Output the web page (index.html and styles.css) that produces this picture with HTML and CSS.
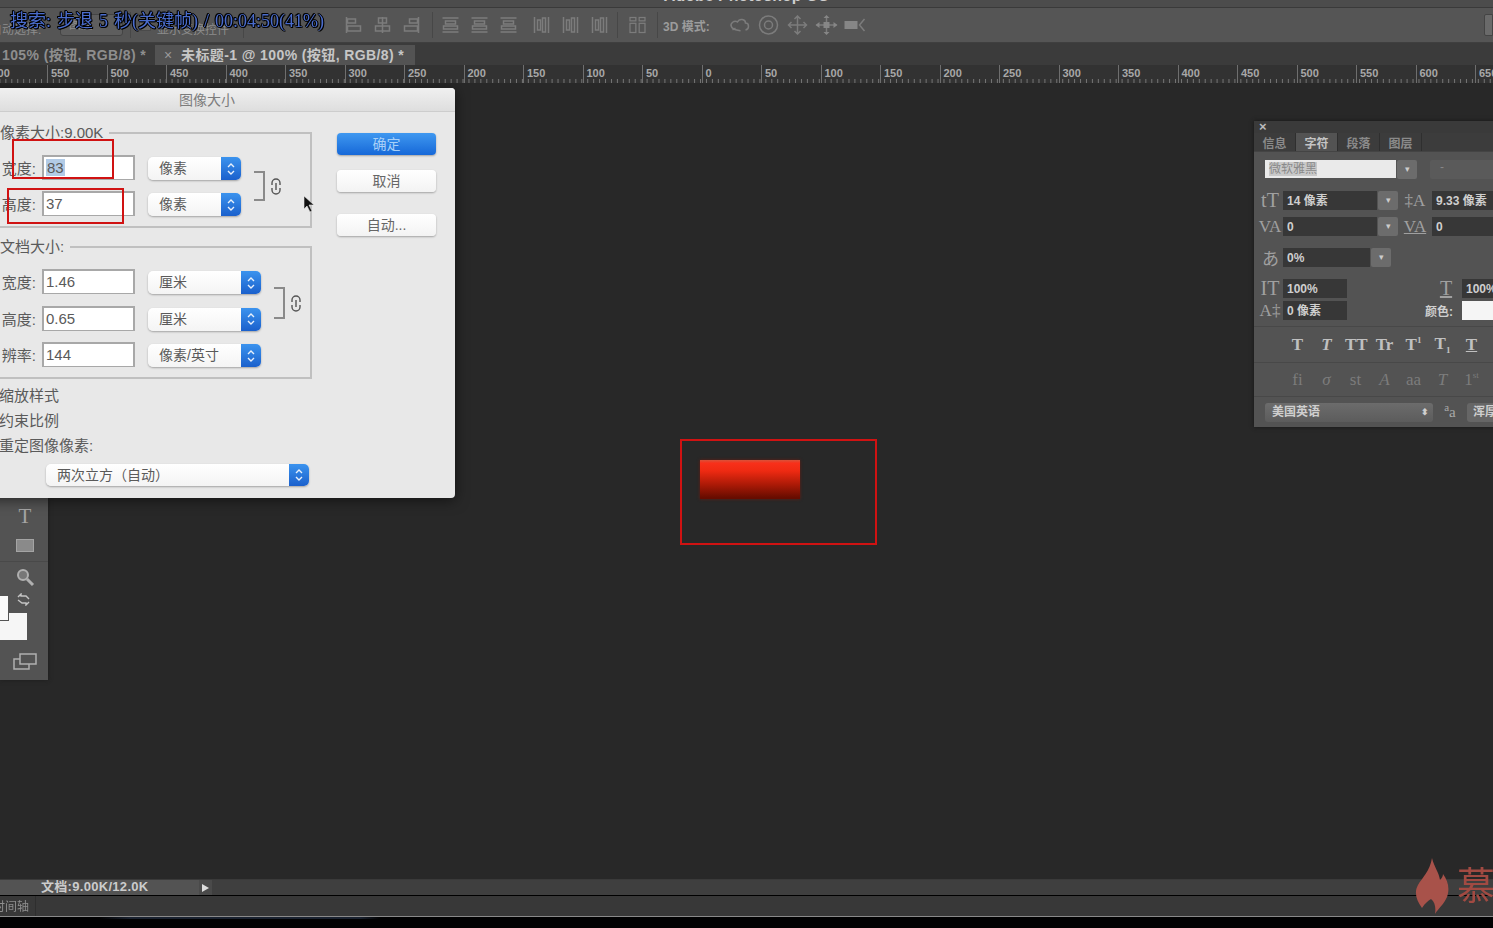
FILE: index.html
```html
<!DOCTYPE html>
<html lang="zh-CN">
<head>
  <meta charset="UTF-8" />
  <title>图像大小</title>
  <link rel="stylesheet" href="styles.css">
</head>
<body>
  <svg class="defs" width="0" height="0">
    <symbol id="al-left" viewBox="0 0 20 20"><path d="M3 2v16" /><rect x="4" y="4" width="8" height="4" /><rect x="4" y="11" width="13" height="5" /></symbol>
    <symbol id="al-mid" viewBox="0 0 20 20"><path d="M10 2v16" /><rect x="6" y="3" width="8" height="5" /><rect x="3" y="11" width="14" height="5" /></symbol>
    <symbol id="al-right" viewBox="0 0 20 20"><path d="M17 2v16" /><rect x="8" y="4" width="8" height="4" /><rect x="3" y="11" width="13" height="5" /></symbol>
    <symbol id="dist-h" viewBox="0 0 20 20"><path d="M2 3h16M2 17h16" /><rect x="5" y="6" width="10" height="3" /><rect x="3" y="11" width="14" height="3" /></symbol>
    <symbol id="dist-v" viewBox="0 0 20 20"><path d="M3 2v16M17 2v16" /><rect x="6" y="5" width="3" height="10" /><rect x="11" y="3" width="3" height="14" /></symbol>
    <symbol id="columns" viewBox="0 0 22 24"><rect x="2" y="3" width="7" height="4" /><rect x="13" y="3" width="7" height="4" /><rect x="2" y="10" width="7" height="11" /><rect x="13" y="10" width="7" height="11" /></symbol>
    <symbol id="chain" viewBox="0 0 12 17"><path d="M2 7V5a4 4 0 0 1 8 0v2M2 10v2a4 4 0 0 0 8 0v-2M6 5v7" /></symbol>
    <symbol id="updown" viewBox="0 0 10 16"><path d="M2 6l3-3 3 3M2 10l3 3 3-3" /></symbol>
  </svg>

  <div class="app">
    <div class="title-bar"><span>Adobe Photoshop CC</span></div>

    <div class="options-bar">
      <span class="opt-label">自动选择:</span>
      <span class="opt-select">图层</span>
      <i class="opt-sep sep-a"></i>
      <span class="opt-check"></span>
      <span class="opt-text">显示变换控件</span>
      <i class="opt-sep sep-b"></i>
      <span class="opt-dim"></span>
      <svg class="opt-icon"><use href="#al-left" /></svg>
      <svg class="opt-icon"><use href="#al-mid" /></svg>
      <svg class="opt-icon"><use href="#al-right" /></svg>
      <i class="opt-sep sep-c"></i>
      <svg class="opt-icon"><use href="#dist-h" /></svg>
      <svg class="opt-icon"><use href="#dist-h" /></svg>
      <svg class="opt-icon"><use href="#dist-h" /></svg>
      <svg class="opt-icon gap-left"><use href="#dist-v" /></svg>
      <svg class="opt-icon"><use href="#dist-v" /></svg>
      <svg class="opt-icon"><use href="#dist-v" /></svg>
      <i class="opt-sep sep-d"></i>
      <svg class="opt-icon"><use href="#columns" /></svg>
      <i class="opt-sep sep-e"></i>
      <span class="mode-3d">3D 模式:</span>
      <svg class="opt-icon" viewBox="0 0 24 20"><path d="M4 12c-2-4 3-7 6-5 2-4 8-3 8 1 4 0 4 6 0 7M4 12c2 3 6 3 9 4M8 13l-3 2" /></svg>
      <svg class="opt-icon" viewBox="0 0 24 20"><circle cx="12" cy="10" r="9" /><circle cx="12" cy="10" r="4" /></svg>
      <svg class="opt-icon" viewBox="0 0 24 20"><path d="M12 1v18M3 10h18M9 4l3-3 3 3M9 16l3 3 3-3M6 7l-3 3 3 3M18 7l3 3-3 3" /></svg>
      <svg class="opt-icon" viewBox="0 0 24 20"><path d="M2 10h20M12 2v16" /><rect class="solid" x="9" y="7" width="6" height="6" /><path class="solid" d="M9 3h6l-3-3zM9 17h6l-3 3zM5 7v6l-4-3zM19 7v6l4-3z" /></svg>
      <svg class="opt-icon" viewBox="0 0 24 20"><rect class="solid" x="1" y="6" width="13" height="8" /><path d="M21 4l-5 6 5 6" /></svg>
      <span class="opt-end"></span>
    </div>

    <div class="tab-bar">
      <span class="tab">105% (按钮, RGB/8) *</span>
      <span class="tab tab-active"><b class="tab-close">×</b>未标题-1 @ 100% (按钮, RGB/8) *</span>
    </div>

    <div class="ruler">
      <span>600</span><span>550</span><span>500</span><span>450</span><span>400</span><span>350</span><span>300</span><span>250</span><span>200</span><span>150</span><span>100</span><span>50</span><span>0</span><span>50</span><span>100</span><span>150</span><span>200</span><span>250</span><span>300</span><span>350</span><span>400</span><span>450</span><span>500</span><span>550</span><span>600</span><span>650</span>
    </div>

    <div class="canvas">
      <div class="red-button"></div>

      <div class="tools">
        <div class="tool tool-text">T</div>
        <div class="tool"><span class="tool-rect"></span></div>
        <div class="tool-line"></div>
        <div class="tool">
          <svg width="20" height="20" viewBox="0 0 20 20"><circle cx="8" cy="8" r="5" class="lens" /><path d="M12 12l6 6" class="lens-handle" /></svg>
        </div>
        <div class="swatches">
          <span class="swatch-back"></span>
          <span class="swatch-front"></span>
          <svg class="swap" width="13" height="13" viewBox="0 0 13 13"><path d="M1 4l3-3v2h5l3 3M12 9l-3 3v-2H5L1 7" /></svg>
        </div>
        <div class="tool tool-screen">
          <svg width="24" height="18" viewBox="0 0 24 18"><rect x="1" y="6" width="15" height="10" /><rect x="7" y="1" width="16" height="10" /></svg>
        </div>
      </div>

      <div class="dialog">
        <div class="dialog-title">图像大小</div>
        <div class="dialog-body">
          <div class="dialog-left">
            <fieldset class="group group-pixels">
              <legend>像素大小:9.00K</legend>
              <div class="rows">
                <div class="row">
                  <label>宽度:</label>
                  <div class="field"><span class="selected">83</span></div>
                  <div class="select"><span>像素</span><b class="stepper"><svg width="10" height="16"><use href="#updown" /></svg></b></div>
                </div>
                <div class="row">
                  <label>高度:</label>
                  <div class="field">37</div>
                  <div class="select"><span>像素</span><b class="stepper"><svg width="10" height="16"><use href="#updown" /></svg></b></div>
                </div>
              </div>
              <div class="link">
                <span class="bracket"></span>
                <svg class="chain" width="12" height="17"><use href="#chain" /></svg>
              </div>
            </fieldset>

            <fieldset class="group group-doc">
              <legend>文档大小:</legend>
              <div class="rows">
                <div class="row">
                  <label>宽度:</label>
                  <div class="field">1.46</div>
                  <div class="select"><span>厘米</span><b class="stepper"><svg width="10" height="16"><use href="#updown" /></svg></b></div>
                </div>
                <div class="row">
                  <label>高度:</label>
                  <div class="field">0.65</div>
                  <div class="select"><span>厘米</span><b class="stepper"><svg width="10" height="16"><use href="#updown" /></svg></b></div>
                </div>
                <div class="row">
                  <label>辨率:</label>
                  <div class="field">144</div>
                  <div class="select"><span>像素/英寸</span><b class="stepper"><svg width="10" height="16"><use href="#updown" /></svg></b></div>
                </div>
              </div>
              <div class="link">
                <span class="bracket"></span>
                <svg class="chain" width="12" height="17"><use href="#chain" /></svg>
              </div>
            </fieldset>

            <div class="opt-line">缩放样式</div>
            <div class="opt-line">约束比例</div>
            <div class="opt-line">重定图像像素:</div>
            <div class="select select-wide"><span>两次立方（自动）</span><b class="stepper"><svg width="10" height="16"><use href="#updown" /></svg></b></div>
          </div>

          <div class="dialog-right">
            <button class="btn btn-ok">确定</button>
            <button class="btn btn-cancel">取消</button>
            <button class="btn btn-auto">自动...</button>
          </div>
        </div>
      </div>

      <svg class="cursor" width="14" height="20" viewBox="0 0 14 20"><path d="M1 1l0 13 3-3 3 6 2-1-3-6h5z" /></svg>

      <div class="panel">
        <div class="panel-head">×</div>
        <div class="panel-tabs">
          <span>信息</span><span class="on">字符</span><span>段落</span><span>图层</span>
        </div>
        <div class="p-row p-font">
          <span class="font-input"><span>微软雅黑</span></span>
          <b class="p-drop">▾</b>
          <span class="font-style">-</span>
        </div>
        <div class="p-row p-size">
          <span class="p-ico ico-big">tT</span>
          <span class="p-field w94">14 像素</span><b class="p-drop">▾</b>
          <span class="p-ico ico-right">‡A</span>
          <span class="p-field w70">9.33 像素</span>
        </div>
        <div class="p-row p-kern">
          <span class="p-ico">VA</span>
          <span class="p-field w94">0</span><b class="p-drop">▾</b>
          <span class="p-ico ico-right ico-under">VA</span>
          <span class="p-field w70">0</span>
        </div>
        <div class="p-row p-scale">
          <span class="p-ico">あ</span>
          <span class="p-field w87">0%</span><b class="p-drop">▾</b>
        </div>
        <div class="p-row p-vert">
          <span class="p-ico ico-big">IT</span>
          <span class="p-field w64">100%</span>
          <span class="p-ico ico-far ico-big">T</span>
          <span class="p-field w70">100%</span>
        </div>
        <div class="p-row p-base">
          <span class="p-ico">A‡</span>
          <span class="p-field w64">0 像素</span>
          <span class="p-color">颜色:</span>
          <span class="p-white"></span>
        </div>
        <div class="p-glyphs">
          <span>T</span><span class="it">T</span><span>TT</span><span>Tr</span><span>T<sup>1</sup></span><span>T<sub>1</sub></span><span class="un">T</span>
        </div>
        <div class="p-glyphs p-dim">
          <span>fi</span><span class="it">σ</span><span>st</span><span class="it">A</span><span>aa</span><span class="it">T</span><span>1<sup>st</sup></span>
        </div>
        <div class="p-row p-lang">
          <span class="lang-select">美国英语<i>⬍</i></span>
          <span class="lang-aa"><sup>a</sup>a</span>
          <span class="lang-smooth">浑厚</span>
        </div>
      </div>
    </div>

    <div class="status-bar">
      <span class="status-doc">文档:9.00K/12.0K</span>
      <span class="status-arrow"></span>
    </div>
    <div class="timeline-bar"><span>时间轴</span></div>
    <div class="video-strip"></div>

    <div class="watermark">
      <svg width="34" height="56" viewBox="0 0 34 56"><path d="M17 0c2 9 7 14 8 22 2-2 3-4 3-6 5 7 7 14 4 23-3 7-9 12-12 17 1-6 0-12-4-15-3 2-6 4-9 9C1 42-1 34 3 27c4-7 12-14 14-27z" /></svg>
      <span>慕课</span>
    </div>
  </div>

  <div class="caption">搜索: 步退 5 秒(关键帧) / 00:04:50(41%)</div>
  <div class="mark mark-canvas"></div>
  <div class="mark mark-width"></div>
  <div class="mark mark-height"></div>
</body>
</html>
```

FILE: styles.css
```css
* {
  box-sizing: border-box;
}
html, body {
  height: 100%;
}
body {
  margin: 0;
  position: relative;
  overflow: hidden;
  background: #000;
  font-family: "Liberation Sans", "Noto Sans CJK SC", sans-serif;
}
.defs {
  position: absolute;
}
.app {
  position: relative;
  height: 100%;
  display: flex;
  flex-direction: column;
  overflow: hidden;
  filter: blur(0.6px);
}

/* top bars */
.title-bar {
  height: 8px;
  flex: none;
  background: #4c4c4c;
  border-bottom: 1px solid #3a3a3a;
  text-align: center;
  overflow: hidden;
}
.title-bar span {
  display: block;
  margin-top: -13px;
  font-size: 16px;
  line-height: 18px;
  font-weight: bold;
  color: #cfcfcf;
}
.options-bar {
  height: 35px;
  flex: none;
  display: flex;
  align-items: center;
  background: #555;
  border-bottom: 1px solid #3f3f3f;
  color: #8c8c8c;
  font-size: 12px;
}
.opt-label {
  width: 60px;
  flex: none;
  white-space: nowrap;
  margin-left: -10px;
  margin-right: 10px;
  padding-top: 6px;
}
.opt-select {
  width: 63px;
  height: 22px;
  flex: none;
  background: #5e5e5e;
  border: 1px solid #444;
  border-radius: 3px;
  padding-left: 8px;
  line-height: 20px;
}
.opt-sep {
  width: 1px;
  height: 26px;
  flex: none;
  background: #474747;
}
.sep-a { margin: 0 8px 0 7px; }
.sep-b { margin: 0 10px 0 10px; }
.sep-c { margin: 0 3px 0 6px; }
.sep-d { margin: 0 5px 0 3px; }
.sep-e { margin: 0 5px 0 5px; }
.opt-check {
  width: 12px;
  height: 12px;
  flex: none;
  margin-right: 6px;
  background: #666;
  border: 1px solid #4a4a4a;
}
.opt-text {
  width: 76px;
  flex: none;
  padding-top: 6px;
  white-space: nowrap;
}
.opt-dim {
  width: 85px;
  flex: none;
}
.opt-icon {
  width: 29px;
  height: 20px;
  flex: none;
  fill: none;
  stroke: #7c7c7c;
  stroke-width: 1.5;
}
.opt-icon .solid {
  fill: #868686;
  stroke: none;
}
.gap-left {
  margin-left: 4px;
}
.mode-3d {
  width: 62px;
  flex: none;
  font-weight: bold;
  white-space: nowrap;
  color: #9c9c9c;
}
.opt-end {
  width: 9px;
  height: 22px;
  margin-left: auto;
  background: #6a6a6a;
  border: 1px solid #444;
  border-radius: 2px 0 0 2px;
}
.tab-bar {
  height: 22px;
  flex: none;
  display: flex;
  align-items: flex-end;
  background: #3b3b3b;
}
.tab {
  width: 155px;
  height: 20px;
  padding-left: 2px;
  font-size: 14px;
  font-weight: bold;
  letter-spacing: 0.4px;
  line-height: 20px;
  color: #8e8e8e;
  white-space: nowrap;
}
.tab-active {
  width: 260px;
  padding-left: 9px;
  background: #535353;
  color: #c6c6c6;
}
.tab-close {
  display: inline-block;
  width: 17px;
  color: #9a9a9a;
  font-weight: normal;
}
.ruler {
  height: 18px;
  flex: none;
  display: flex;
  overflow: hidden;
  background-color: #323232;
  background-image: linear-gradient(90deg, #757575 1px, transparent 1px);
  background-size: 5.95px 4px;
  background-position: 5.35px bottom;
  background-repeat: repeat-x;
}
.ruler span {
  width: 59.5px;
  flex: none;
  padding: 2px 0 0 3px;
  font-size: 11px;
  font-weight: bold;
  line-height: 13px;
  color: #a8a8a8;
  border-left: 1px solid #6e6e6e;
}
.ruler span:first-child {
  margin-left: -12.5px;
}

/* document area */
.canvas {
  flex: 1;
  position: relative;
  overflow: hidden;
  background: #282828;
}
.red-button {
  position: absolute;
  left: 700px;
  top: 377px;
  width: 100px;
  height: 39px;
  background: linear-gradient(#d8523a 0, #f8301a 8%, #ee2a12 28%, #a81906 65%, #660c00 97%);
  box-shadow: 0 0 3px #6a1c10;
}

/* tool strip */
.tools {
  position: absolute;
  left: 0;
  top: 415px;
  width: 48px;
  height: 182px;
  padding-top: 4px;
  background: #535353;
  box-shadow: 0 0 4px #1c1c1c;
}
.tool {
  height: 29px;
  display: flex;
  align-items: center;
  justify-content: center;
  padding-left: 2px;
}
.tool-text {
  font-family: "Liberation Serif", serif;
  font-size: 21px;
  color: #a6a6a6;
}
.tool-rect {
  width: 18px;
  height: 13px;
  background: #8a8a8a;
  border: 1px solid #a4a4a4;
}
.tool-line {
  height: 1px;
  margin-top: 1px;
  background: #494949;
}
.lens {
  fill: #777;
  stroke: #b0b0b0;
  stroke-width: 2;
}
.lens-handle {
  fill: none;
  stroke: #b0b0b0;
  stroke-width: 3;
}
.swatches {
  position: relative;
  height: 52px;
}
.swatch-back {
  position: absolute;
  left: 0;
  top: 22px;
  width: 27px;
  height: 27px;
  background: #f6f6f6;
}
.swatch-front {
  position: absolute;
  left: 0;
  top: 5px;
  width: 9px;
  height: 25px;
  background: #fafafa;
  border-right: 1px solid #555;
  border-bottom: 1px solid #555;
}
.swap {
  position: absolute;
  left: 17px;
  top: 2px;
  fill: none;
  stroke: #c4c4c4;
  stroke-width: 1.4;
}
.tool-screen {
  height: 32px;
  margin-top: 3px;
}
.tool-screen svg {
  fill: #535353;
  stroke: #b0b0b0;
  stroke-width: 1.5;
}

/* image size dialog */
.dialog {
  position: absolute;
  left: -41px;
  top: 5px;
  width: 496px;
  height: 410px;
  background: #e8e8e8;
  border-radius: 4px;
  box-shadow: 0 2px 14px rgba(0, 0, 0, 0.55);
  color: #5a5a5a;
  font-size: 15px;
}
.dialog-title {
  height: 24px;
  text-align: center;
  font-size: 14px;
  line-height: 25px;
  color: #7c7c7c;
  background: linear-gradient(#f0f0f0, #dedede);
  border-bottom: 1px solid #cdcdcd;
  border-radius: 4px 4px 0 0;
}
.dialog-body {
  display: flex;
  padding: 12px 0 0 20px;
}
.dialog-left {
  width: 333px;
  flex: none;
}
.dialog-right {
  width: 99px;
  margin: 9px 0 0 25px;
  display: flex;
  flex-direction: column;
}
.group {
  display: flex;
  margin: 0;
  padding: 0 0 10px;
  min-width: 0;
  border: 1px solid #c0c0c0;
  border-width: 2px 2px 2px 1px;
}
.group legend {
  margin-left: 20px;
  padding: 0 6px 0 0;
  line-height: 18px;
}
.group-pixels .rows {
  padding-top: 13px;
}
.group-doc {
  margin-top: 10px;
}
.group-doc .rows {
  padding-top: 13px;
  gap: 11.5px;
}
.rows {
  display: flex;
  flex-direction: column;
  gap: 11px;
}
.row {
  height: 25px;
  display: flex;
  align-items: center;
}
.row label {
  width: 56px;
  flex: none;
  text-align: right;
  white-space: nowrap;
}
.field {
  width: 93px;
  height: 25px;
  flex: none;
  margin: 0 13px 0 6px;
  padding-left: 2px;
  font-size: 15px;
  line-height: 22px;
  background: #fff;
  border: 1px solid #a8a8a8;
  border-width: 2px 2px 1px 2px;
}
.selected {
  background: #b2cbe6;
  padding: 0 1px;
}
.select {
  height: 23px;
  display: flex;
  width: 93px;
  flex: none;
  margin-top: 2px;
  background: linear-gradient(#fff, #f4f4f4);
  border-radius: 5px;
  box-shadow: 0 1px 2px rgba(0, 0, 0, 0.3);
  overflow: hidden;
}
.group-doc .select {
  width: 113px;
}
.select span {
  flex: 1;
  padding-left: 11px;
  font-size: 14px;
  line-height: 23px;
  white-space: nowrap;
}
.stepper {
  width: 20px;
  flex: none;
  display: flex;
  align-items: center;
  justify-content: center;
  background: linear-gradient(#3b93ee, #1a60cc);
}
.stepper svg {
  fill: none;
  stroke: #e8f0fb;
  stroke-width: 1.4;
}
.link {
  height: 30px;
  display: flex;
  align-items: center;
  margin: 29px 0 0 13px;
}
.group-doc .link {
  height: 32px;
  margin-top: 31px;
}
.bracket {
  width: 11px;
  height: 100%;
  border: 2px solid #8a8a8a;
  border-left: 0;
}
.chain {
  margin-left: 5px;
  fill: none;
  stroke: #555;
  stroke-width: 1.4;
}
.opt-line {
  line-height: 25px;
  white-space: nowrap;
  margin-left: 20px;
}
.group-doc + .opt-line {
  margin-top: 4px;
}
.select-wide,
.group-doc .select.select-wide {
  width: 263px;
  height: 22px;
  margin: 6px 0 0 67px;
}
.btn {
  height: 22px;
  padding: 0 0 3px;
  border: 0;
  border-radius: 4px;
  font-family: inherit;
  font-size: 14px;
  color: #666;
  background: linear-gradient(#fff, #f3f3f3);
  box-shadow: 0 1px 2px rgba(0, 0, 0, 0.3);
}
.btn-ok {
  color: #a8d0f8;
  background: linear-gradient(#3f98f0, #1668d8);
}
.btn-cancel {
  margin-top: 15px;
}
.btn-auto {
  margin-top: 22px;
}
.cursor {
  position: absolute;
  left: 303px;
  top: 112px;
  fill: #111;
  stroke: #e8e8e8;
  stroke-width: 0.6;
}

/* character panel */
.panel {
  position: absolute;
  left: 1254px;
  top: 38px;
  width: 270px;
  height: 306px;
  background: #535353;
  box-shadow: 0 0 4px #161616;
  color: #cfcfcf;
  font-size: 12px;
}
.panel-head {
  height: 12px;
  padding-left: 5px;
  background: #3a3a3a;
  font-size: 13px;
  font-weight: bold;
  line-height: 12px;
  color: #bbb;
}
.panel-tabs {
  height: 19px;
  display: flex;
  background: #3c3c3c;
  border-bottom: 1px solid #444;
  color: #8a8a8a;
}
.panel-tabs span {
  width: 42px;
  text-align: center;
  line-height: 22px;
  font-weight: bold;
  border-right: 1px solid #2f2f2f;
}
.panel-tabs .on {
  background: #535353;
  color: #c4c4c4;
}
.p-row {
  display: flex;
  align-items: center;
}
.p-font {
  height: 18px;
  margin-top: 8px;
  padding-left: 11px;
}
.font-input {
  width: 131px;
  height: 18px;
  padding-left: 4px;
  background: #eaeaea;
  line-height: 18px;
  color: #8a8a8a;
}
.font-input span {
  background: #c9c9c9;
}
.p-drop {
  width: 20px;
  height: 19px;
  flex: none;
  margin-left: 1px;
  background: #6c6c6c;
  border-radius: 2px;
  text-align: center;
  font-size: 9px;
  font-weight: normal;
  line-height: 19px;
  color: #ccc;
}
.font-style {
  width: 70px;
  height: 19px;
  margin-left: 13px;
  padding-left: 10px;
  background: #5a5a5a;
  border-radius: 2px;
  color: #888;
}
.p-size { margin-top: 13px; }
.p-kern { margin-top: 7px; }
.p-scale { margin-top: 12px; }
.p-vert { margin-top: 12px; }
.p-base { margin-top: 3px; }
.p-size, .p-kern, .p-scale, .p-vert, .p-base {
  height: 19px;
  padding-left: 3px;
}
.p-ico {
  width: 26px;
  flex: none;
  text-align: center;
  font-family: "Liberation Serif", serif;
  font-size: 17px;
  color: #a0a0a0;
}
.ico-big {
  font-size: 20px;
}
.ico-right {
  width: 34px;
}
.ico-under {
  text-decoration: underline;
}
.ico-far {
  width: 30px;
  margin-left: 84px;
  margin-right: 1px;
  text-decoration: underline;
}
.p-field {
  height: 19px;
  flex: none;
  padding-left: 4px;
  background: #373737;
  font-weight: bold;
  line-height: 20px;
  white-space: nowrap;
  overflow: hidden;
}
.w94 { width: 94px; }
.w87 { width: 87px; }
.w70 { width: 70px; }
.w64 { width: 64px; }
.p-color {
  width: 36px;
  margin-left: 78px;
  margin-right: 1px;
  font-weight: bold;
}
.p-white {
  width: 60px;
  height: 19px;
  background: #f5f5f5;
}
.p-glyphs {
  height: 36px;
  margin-top: 6px;
  padding: 0 0 0 33px;
  display: flex;
  gap: 8px;
  align-items: center;
  border-top: 1px solid #484848;
  font-family: "Liberation Serif", serif;
  font-size: 17px;
  font-weight: bold;
  color: #c0c0c0;
}
.p-glyphs span {
  width: 21px;
  text-align: center;
  white-space: nowrap;
}
.p-glyphs sup, .p-glyphs sub {
  font-size: 9px;
}
.p-glyphs .it {
  font-style: italic;
}
.p-glyphs .un {
  text-decoration: underline;
}
.p-dim {
  height: 34px;
  margin-top: 0;
  color: #7c7c7c;
  font-weight: normal;
}
.p-lang {
  height: 32px;
  padding-left: 11px;
  border-top: 1px solid #484848;
}
.lang-select {
  width: 168px;
  height: 19px;
  display: flex;
  justify-content: space-between;
  padding: 0 4px 0 7px;
  background: linear-gradient(#6c6c6c, #5c5c5c);
  border-radius: 3px;
  font-weight: bold;
  line-height: 19px;
}
.lang-select i {
  font-style: normal;
  font-size: 9px;
}
.lang-aa {
  width: 34px;
  text-align: center;
  font-family: "Liberation Serif", serif;
  font-size: 15px;
  color: #a8a8a8;
}
.lang-aa sup {
  font-size: 11px;
  line-height: 0;
}
.lang-smooth {
  height: 19px;
  padding-left: 6px;
  background: #666;
  border-radius: 3px;
  font-weight: bold;
  line-height: 19px;
}

/* bottom bars */
.status-bar {
  height: 16px;
  flex: none;
  display: flex;
  background: #3f3f3f;
  border-top: 1px solid #3a3a3a;
}
.status-doc {
  width: 199px;
  padding-left: 41px;
  background: #535353;
  font-size: 13px;
  font-weight: bold;
  letter-spacing: 0.3px;
  line-height: 14px;
  color: #cccccc;
  white-space: nowrap;
}
.status-arrow {
  width: 13px;
  background: #4a4a4a;
  position: relative;
}
.status-arrow::after {
  content: "";
  position: absolute;
  left: 3px;
  top: 4px;
  border-left: 7px solid #ddd;
  border-top: 4px solid transparent;
  border-bottom: 4px solid transparent;
}
.timeline-bar {
  height: 21px;
  flex: none;
  margin-top: 1px;
  background: #383838;
  border-bottom: 1px solid #8a8a8a;
}
.timeline-bar span {
  display: block;
  width: 36px;
  height: 100%;
  border-right: 1px solid #2e2e2e;
  font-size: 12px;
  line-height: 23px;
  color: #8e8e8e;
  text-indent: -7px;
  white-space: nowrap;
  overflow: hidden;
}
.video-strip {
  height: 11px;
  flex: none;
  background-color: #020203;
  background-image: linear-gradient(90deg, #020203 100px, #1a2230 130px, #1a2230 360px, #020203 380px);
  background-size: 100% 2px;
  background-repeat: no-repeat;
}

/* watermark over the lower corner */
.watermark {
  position: absolute;
  left: 1415px;
  top: 858px;
  display: flex;
  align-items: center;
  gap: 8px;
  white-space: nowrap;
  color: #a24a42;
}
.watermark svg {
  fill: #a8524a;
  flex: none;
}
.watermark span {
  font-size: 38px;
  line-height: 50px;
}

/* overlays on the recording */
.caption {
  position: absolute;
  left: 10px;
  top: 10px;
  font-family: "Liberation Serif", "Noto Sans CJK SC", serif;
  font-size: 18px;
  word-spacing: 1.5px;
  line-height: 22px;
  white-space: pre;
  color: #4a6ccc;
  text-shadow: 1px 0 0 #000, -1px 0 0 #000, 0 1px 0 #000, 0 -1px 0 #000, 1px 1px 0 #000, -1px -1px 0 #000;
}
.mark {
  position: absolute;
  border: 2px solid #d01212;
}
.mark-canvas {
  left: 680px;
  top: 439px;
  width: 197px;
  height: 106px;
}
.mark-width {
  left: 12px;
  top: 139px;
  width: 102px;
  height: 40px;
}
.mark-height {
  left: 7px;
  top: 188px;
  width: 117px;
  height: 36px;
}
```
